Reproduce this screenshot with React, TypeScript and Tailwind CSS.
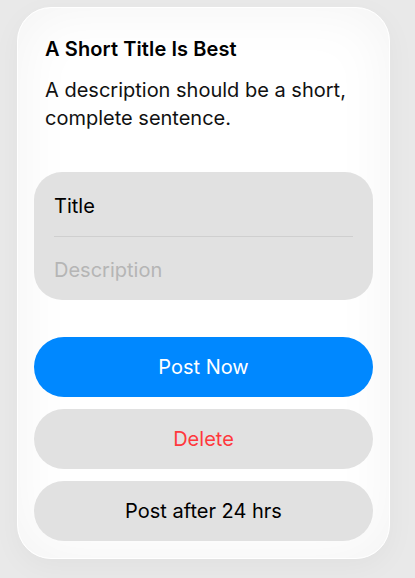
export default function App() {
  return (
    <div className="min-h-[578px] w-[415px] bg-[#e9e9e9] pt-[7px] pl-[17px] font-['Inter',sans-serif]">
      <div className="w-[373px] rounded-[34px] border border-white bg-white px-[16px] pb-[17px] pt-[29px] shadow-[inset_0_0_60px_rgba(0,0,0,0.05),0_8px_30px_rgba(0,0,0,0.04)]">
        <div className="px-[11px]">
          <h1 className="text-[20px] font-semibold leading-[24px] tracking-[0.1px] text-black">A Short Title Is Best</h1>
          <p className="mt-[15px] text-[20px] leading-[28px] text-[#111]">
            A description should be a short, complete sentence.
          </p>
        </div>
        <div className="mt-[40px] rounded-[28px] bg-[#e1e1e1] px-[20px]">
          <div className="border-b border-[#cfcfcf] pt-[22px] pb-[18px] text-[20px] leading-[24px] text-black">Title</div>
          <div className="pt-[21px] pb-[18px] text-[20px] leading-[24px] text-[#b5b5b5]">Description</div>
        </div>
        <div className="mt-[37px] flex flex-col gap-[12px]">
          <button className="h-[60px] rounded-full bg-[#0088ff] text-[20px] text-white">Post Now</button>
          <button className="h-[60px] rounded-full bg-[#e1e1e1] text-[20px] text-[#ff383c]">Delete</button>
          <button className="h-[60px] rounded-full bg-[#e1e1e1] text-[20px] text-black">Post after 24 hrs</button>
        </div>
      </div>
    </div>
  );
}
